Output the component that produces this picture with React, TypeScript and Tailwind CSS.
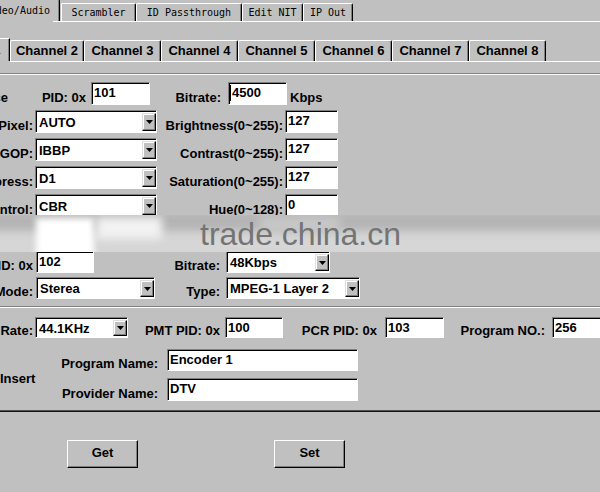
import React from "react";

type P = { cls?: string; children?: React.ReactNode };

const Tri = () => (
  <svg width="7" height="4" viewBox="0 0 7 4">
    <path d="M0 0H7L3.5 4Z" fill="#000" />
  </svg>
);

function L({ cls = "", children }: P) {
  return (
    <div className={`shrink-0 flex justify-end whitespace-nowrap leading-[14px] pb-[0px] ${cls}`}>
      {children}
    </div>
  );
}

function Input({ cls = "", children, cursor = false }: P & { cursor?: boolean }) {
  return (
    <div
      className={`shrink-0 h-full flex items-start bg-white border border-t-[#808080] border-l-[#808080] border-r-white border-b-white shadow-[inset_1px_1px_0_#000] pl-[2px] pt-[2px] leading-[15px] whitespace-nowrap overflow-hidden ${cls}`}
    >
      {cursor && <span className="block w-[1px] h-[16px] bg-black mr-[1px] -ml-[1px]" />}
      {children}
    </div>
  );
}

function Select({ cls = "", children }: P) {
  return (
    <div
      className={`shrink-0 h-full flex bg-white border border-t-[#808080] border-l-[#808080] border-r-white border-b-white shadow-[inset_1px_1px_0_#000] pt-[2px] pb-[1px] ${cls}`}
    >
      <div className="flex-1 pl-[3px] pt-[1px] flex items-center leading-[14px] whitespace-nowrap overflow-hidden">
        {children}
      </div>
      <div className="w-[14px] shrink-0 bg-[#c0c0c0] border border-t-[#dfdfdf] border-l-[#dfdfdf] border-r-black border-b-black shadow-[inset_-1px_-1px_0_#808080,inset_1px_1px_0_#fff] flex items-center justify-center">
        <Tri />
      </div>
    </div>
  );
}

function Btn({ cls = "", children }: P) {
  return (
    <div
      className={`shrink-0 w-[71px] h-full flex items-center justify-center border border-t-white border-l-white border-r-black border-b-black shadow-[inset_-1px_-1px_0_#808080] leading-[14px] pb-[2px] ${cls}`}
    >
      {children}
    </div>
  );
}

const topTab =
  "shrink-0 flex items-center justify-center border-t border-l border-r border-t-white border-l-white border-r-black shadow-[inset_-1px_0_0_#808080] rounded-t-[2px]";

const chTab =
  "shrink-0 w-[77px] h-[21px] flex items-center justify-center border-t border-l border-r border-t-white border-l-white border-r-black shadow-[inset_-1px_0_0_#808080] rounded-t-[2px] leading-[14px]";

export default function App() {
  return (
    <div className="relative w-[600px] h-[492px] overflow-hidden bg-[#c0c0c0] text-black font-['Liberation_Sans',Arial,sans-serif] font-bold text-[13px]">
      <div className="flex flex-col">
        {/* top tab strip */}
        <div className="flex items-end h-[21px] font-['DejaVu_Sans_Mono',monospace] font-normal text-[10px] leading-[12px]">
          <div className={`${topTab} ml-[-21px] w-[81px] h-[22px] justify-end pr-[9px]`}>Video/Audio</div>
          <div className={`${topTab} ml-[1px] w-[75px] h-[18px]`}>Scrambler</div>
          <div className={`${topTab} w-[106px] h-[18px]`}>ID Passthrough</div>
          <div className={`${topTab} w-[61px] h-[18px]`}>Edit NIT</div>
          <div className={`${topTab} w-[50px] h-[18px]`}>IP Out</div>
        </div>
        <div className="h-px bg-white ml-[53px]" />

        {/* channel tabs */}
        <div className="flex items-end h-[23px] mt-[16px]">
          <div className="shrink-0 ml-[-70px] w-[80px] h-[23px] flex items-center justify-center border-t border-r border-t-white border-r-black shadow-[inset_-1px_0_0_#808080] leading-[14px]">
            Channel 1
          </div>
          <div className={`${chTab} !w-[74px]`}>Channel 2</div>
          <div className={chTab}>Channel 3</div>
          <div className={chTab}>Channel 4</div>
          <div className={chTab}>Channel 5</div>
          <div className={chTab}>Channel 6</div>
          <div className={chTab}>Channel 7</div>
          <div className={chTab}>Channel 8</div>
        </div>
        <div className="h-px bg-white ml-[10px]" />

        {/* group line */}
        <div className="h-px bg-[#808080] mt-[11px]" />
        <div className="h-px bg-white" />

        {/* video rows */}
        <div className="flex flex-col gap-[5px] mt-[7px]">
          <div className="flex items-end h-[23px]">
            <L cls="w-[8px]">Source</L>
            <L cls="w-[78px]">PID: 0x</L>
            <Input cls="ml-[5px] w-[59px]">101</Input>
            <L cls="w-[71px]">Bitrate:</L>
            <Input cls="ml-[7px] w-[59px]" cursor>
              4500
            </Input>
            <L cls="ml-[3px]">Kbps</L>
          </div>
          <div className="flex items-end h-[23px]">
            <L cls="w-[33px]">Pixel:</L>
            <Select cls="ml-[2px] w-[122px]">AUTO</Select>
            <L cls="w-[126px]">Brightness(0~255):</L>
            <Input cls="ml-[2px] w-[53px]">127</Input>
          </div>
          <div className="flex items-end h-[23px]">
            <L cls="w-[33px]">GOP:</L>
            <Select cls="ml-[2px] w-[122px]">IBBP</Select>
            <L cls="w-[126px]">Contrast(0~255):</L>
            <Input cls="ml-[2px] w-[53px]">127</Input>
          </div>
          <div className="flex items-end h-[23px]">
            <L cls="w-[33px]">Compress:</L>
            <Select cls="ml-[2px] w-[122px]">D1</Select>
            <L cls="w-[126px]">Saturation(0~255):</L>
            <Input cls="ml-[2px] w-[53px]">127</Input>
          </div>
          <div className="flex items-end h-[23px]">
            <L cls="w-[33px]">Rate Control:</L>
            <Select cls="ml-[2px] w-[122px]">CBR</Select>
            <L cls="w-[126px]">Hue(0~128):</L>
            <Input cls="ml-[2px] w-[53px]">0</Input>
          </div>
        </div>

        {/* audio rows */}
        <div className="flex items-end h-[22px] mt-[34px]">
          <L cls="w-[33px]">PID: 0x</L>
          <Input cls="ml-[3px] w-[58px]">102</Input>
          <L cls="w-[126px]">Bitrate:</L>
          <Select cls="ml-[6px] w-[104px]">48Kbps</Select>
        </div>
        <div className="flex items-end h-[22px] mt-[4px]">
          <L cls="w-[33px]">Mode:</L>
          <Select cls="ml-[3px] w-[119px]">Sterea</Select>
          <L cls="w-[65px]">Type:</L>
          <Select cls="ml-[6px] w-[134px]">MPEG-1 Layer 2</Select>
        </div>

        <div className="h-px bg-[#808080] mt-[7px]" />
        <div className="h-px bg-white" />

        {/* program rows */}
        <div className="flex items-end h-[21px] mt-[9px]">
          <L cls="w-[33px]">Sample Rate:</L>
          <Select cls="ml-[2px] w-[93px]">44.1KHz</Select>
          <L cls="w-[92px]">PMT PID: 0x</L>
          <Input cls="ml-[5px] w-[58px]">100</Input>
          <L cls="w-[94px]">PCR PID: 0x</L>
          <Input cls="ml-[8px] w-[59px]">103</Input>
          <L cls="w-[101px]">Program NO.:</L>
          <Input cls="ml-[7px] w-[60px]">256</Input>
        </div>
        <div className="flex mt-[11px]">
          <div className="w-[40px] shrink-0 pt-[23px] leading-[14px] whitespace-nowrap">Insert</div>
          <div className="flex flex-col gap-[7px]">
            <div className="flex items-end h-[22px]">
              <L cls="w-[118px]">Program Name:</L>
              <Input cls="ml-[9px] w-[191px]">Encoder 1</Input>
            </div>
            <div className="flex items-end h-[23px]">
              <L cls="w-[118px]">Provider Name:</L>
              <Input cls="ml-[9px] w-[191px]">DTV</Input>
            </div>
          </div>
        </div>

        <div className="h-px bg-[#505050] mt-[9px]" />
        <div className="h-px bg-[#151515]" />

        <div className="flex h-[28px] mt-[28px]">
          <Btn cls="ml-[67px]">Get</Btn>
          <Btn cls="ml-[136px]">Set</Btn>
        </div>
      </div>

      {/* watermark band overlay */}
      <div className="absolute left-0 top-[215px] w-[600px] h-[37px] bg-[#d6d6d6] overflow-hidden">
        <div className="absolute left-[-10px] top-[-4px] w-[620px] h-[20px] bg-[#b4b4b4] blur-[4px]" />
        <div className="absolute left-[36px] top-[3px] w-[58px] h-[40px] bg-white blur-[3px]" />
        <div className="absolute left-[96px] top-[2px] w-[66px] h-[22px] bg-[#f2f2f2] blur-[4px]" />
        <div className="absolute left-[260px] top-[2px] w-[80px] h-[14px] bg-[#c8c8c8] blur-[4px]" />
        <div className="absolute left-[200px] top-[3px] text-[32px] leading-[32px] font-normal text-[#747474] whitespace-nowrap">
          trade.china.cn
        </div>
      </div>
    </div>
  );
}
